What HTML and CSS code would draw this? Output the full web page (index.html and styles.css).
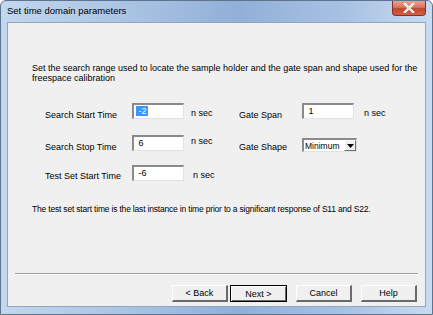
FILE: index.html
```html
<!DOCTYPE html>
<html lang="en">
<head>
    <meta charset="UTF-8">
    <title>Set time domain parameters</title>
    <link rel="stylesheet" href="styles.css">
</head>
<body>

    <div class="window">
        <!-- Title bar -->
        <div class="titlebar">
            <span class="title">Set time domain parameters</span>
            <div class="close">
                <svg width="12" height="10" viewBox="0 0 12 10">
                    <path d="M2 1 L10 9 M10 1 L2 9" stroke="#ffffff" stroke-width="2.4" stroke-linecap="square"/>
                    <path d="M2 1 L10 9 M10 1 L2 9" stroke="#d8d8d8" stroke-width="1"/>
                </svg>
            </div>
        </div>

        <!-- Dialog body -->
        <div class="client">
            <p class="intro">Set the search range used to locate the sample holder and the gate span and shape used for the freespace calibration</p>

            <div class="fields">
                <span class="label row1">Search Start Time</span>
                <div class="edit"><span class="sel"> -2</span></div>
                <span class="unit row1u">n sec</span>
                <span class="label row1">Gate Span</span>
                <div class="edit"> 1</div>
                <span class="unit row1u">n sec</span>

                <span class="label row2">Search Stop Time</span>
                <div class="edit"> 6</div>
                <span class="unit row2u">n sec</span>
                <span class="label row2">Gate Shape</span>
                <div class="combo">
                    <span class="combo-text">Minimum</span>
                    <span class="combo-btn">
                        <svg width="7" height="4" viewBox="0 0 7 4"><path d="M0 0 H7 L3.5 4 Z" fill="#000"/></svg>
                    </span>
                </div>
                <span></span>

                <span class="label row3">Test Set Start Time</span>
                <div class="edit"> -6</div>
                <span class="unit row3u">n sec</span>
            </div>

            <p class="note">The test set start time is the last instance in time prior to a significant response of S11 and S22.</p>

            <div class="separator"></div>

            <div class="buttons">
                <button class="btn">&lt; Back</button>
                <button class="btn default">Next &gt;</button>
                <button class="btn spaced">Cancel</button>
                <button class="btn spaced">Help</button>
            </div>
        </div>
    </div>

</body>
</html>
```

FILE: styles.css
```css
body {
    margin: 0;
    padding: 0;
    width: 433px;
    height: 315px;
    overflow: hidden;
    background: #ffffff;
    font-family: "Liberation Sans", Arial, sans-serif;
}
.window {
    width: 433px;
    height: 315px;
    box-sizing: border-box;
    border: 1px solid #5e7390;
    border-radius: 6px 6px 0 0;
    background: linear-gradient(to right, #c3d7ed 0%, #a9c3e3 30%, #91afd8 55%, #a8c2e4 80%, #c9dbf0 100%);
    position: relative;
}
.titlebar {
    height: 20px;
    display: flex;
    align-items: center;
}
.title {
    font-family: "Liberation Sans", Arial, sans-serif;
    font-size: 9.5px;
    color: #000000;
    padding-left: 6px;
    padding-bottom: 1px;
}
.close {
    position: absolute;
    top: 0;
    right: 6px;
    width: 34px;
    height: 15px;
    box-sizing: border-box;
    border: 1px solid #8c2d1f;
    border-top: none;
    border-radius: 0 0 4px 4px;
    background: linear-gradient(to bottom, #e8a493 0%, #d7735f 45%, #c2432c 55%, #d0624a 100%);
    display: flex;
    align-items: center;
    justify-content: center;
}
.client {
    margin: 1px 6px 0 6px;
    height: 285px;
    box-sizing: border-box;
    border: 1px solid #8fa6c3;
    background: #f0f0f0;
    padding: 0 0 0 24px;
    font-size: 9px;
    color: #000000;
}
.intro {
    margin: 0;
    padding-top: 40px;
    line-height: 10px;
    width: 392px;
}
.fields {
    display: grid;
    grid-template-columns: 87px 52px 55px 63px 55px auto;
    grid-template-rows: 32px 30px 16px;
    margin-top: 20px;
    margin-left: 13px;
    align-items: start;
}
.label {
    line-height: 11px;
    margin-top: 7px;
}
.label.row3 {
    margin-top: 6px;
}
.unit {
    line-height: 11px;
    padding-left: 7px;
    margin-top: 5px;
}
.row2u {
    margin-top: 1px;
}
.row3u {
    margin-top: 5px;
    padding-left: 9px;
}
.edit {
    width: 52px;
    height: 16px;
    box-sizing: border-box;
    background: #ffffff;
    border-style: solid;
    border-width: 2px 1px 1px 2px;
    border-color: #8a8a8a #e2e2e2 #e2e2e2 #8a8a8a;
    white-space: pre;
    line-height: 12px;
    padding-left: 2px;
    font-size: 9px;
}
.sel {
    background: #3399ff;
    color: #ffffff;
    padding-right: 1px;
}
.combo {
    width: 55px;
    height: 14px;
    margin-top: 3px;
    box-sizing: border-box;
    background: #ffffff;
    border-style: solid;
    border-width: 2px 1px 1px 2px;
    border-color: #8a8a8a #e2e2e2 #e2e2e2 #8a8a8a;
    display: flex;
    align-items: center;
    font-size: 8.5px;
}
.combo-text {
    flex: 1;
    padding-left: 1px;
    line-height: 10px;
}
.combo-btn {
    width: 12px;
    height: 11px;
    box-sizing: border-box;
    background: #f0f0f0;
    border-style: solid;
    border-width: 1px;
    border-color: #ffffff #6e6e6e #6e6e6e #ffffff;
    display: flex;
    align-items: center;
    justify-content: center;
}
.note {
    margin: 23px 0 0 0;
    line-height: 11px;
    font-size: 8.5px;
    letter-spacing: -0.19px;
}
.separator {
    margin: 58px 0 0 -17px;
    width: 403px;
    border-top: 1px solid #a0a0a0;
    border-bottom: 1px solid #ffffff;
}
.buttons {
    display: flex;
    margin-top: 10px;
    padding-left: 140px;
}
.btn {
    width: 56px;
    height: 17px;
    padding: 0;
    box-sizing: border-box;
    font-family: "Liberation Sans", Arial, sans-serif;
    font-size: 9px;
    color: #000000;
    background: #f0f0f0;
    border-style: solid;
    border-width: 1px 2px 2px 1px;
    border-color: #ffffff #6a6a6a #6a6a6a #ffffff;
}
.btn.default {
    width: 57px;
    margin-left: 2px;
    border: 1px solid #000000;
    box-shadow: inset 1px 1px 0 #ffffff, inset -1px -1px 0 #6a6a6a;
}
.btn.spaced {
    margin-left: 9px;
}
```
